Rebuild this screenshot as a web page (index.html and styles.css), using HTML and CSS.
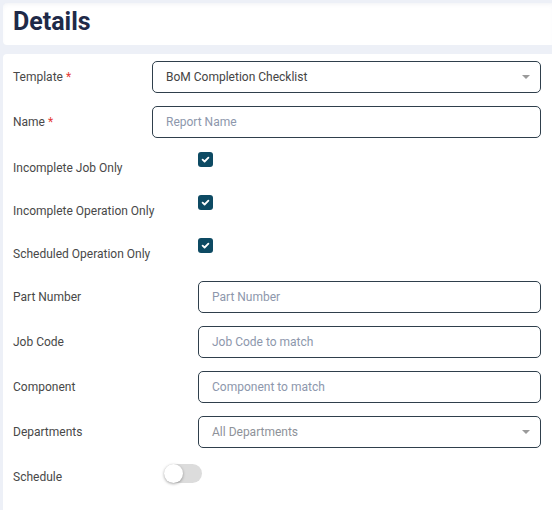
FILE: index.html
```html
<!DOCTYPE html>
<html lang="en">
<head>
<meta charset="utf-8">
<title>Details</title>
<link rel="stylesheet" href="styles.css">
</head>
<body>
<div class="page">
  <div class="header-card">
    <h1 class="title">Details</h1>
  </div>
  <div class="form-card">
    <div class="field">
      <div class="label">Template <span class="req">*</span></div>
      <div class="control select">
        <span class="value">BoM Completion Checklist</span>
        <span class="caret"></span>
      </div>
    </div>
    <div class="field">
      <div class="label">Name <span class="req">*</span></div>
      <div class="control"><span class="placeholder">Report Name</span></div>
    </div>
    <div class="check-row">
      <div class="label label-wide label-check">Incomplete Job Only</div>
      <div class="checkbox"><svg viewBox="0 0 15 15" width="15" height="15"><path d="M4.6 7.6 L6.6 9.5 L10.4 5.6" fill="none" stroke="#fff" stroke-width="1.8" stroke-linecap="round" stroke-linejoin="round"/></svg></div>
    </div>
    <div class="check-row">
      <div class="label label-wide label-check">Incomplete Operation Only</div>
      <div class="checkbox"><svg viewBox="0 0 15 15" width="15" height="15"><path d="M4.6 7.6 L6.6 9.5 L10.4 5.6" fill="none" stroke="#fff" stroke-width="1.8" stroke-linecap="round" stroke-linejoin="round"/></svg></div>
    </div>
    <div class="check-row">
      <div class="label label-wide label-check">Scheduled Operation Only</div>
      <div class="checkbox"><svg viewBox="0 0 15 15" width="15" height="15"><path d="M4.6 7.6 L6.6 9.5 L10.4 5.6" fill="none" stroke="#fff" stroke-width="1.8" stroke-linecap="round" stroke-linejoin="round"/></svg></div>
    </div>
    <div class="field field-first-wide">
      <div class="label label-wide">Part Number</div>
      <div class="control"><span class="placeholder">Part Number</span></div>
    </div>
    <div class="field">
      <div class="label label-wide">Job Code</div>
      <div class="control"><span class="placeholder">Job Code to match</span></div>
    </div>
    <div class="field">
      <div class="label label-wide">Component</div>
      <div class="control"><span class="placeholder">Component to match</span></div>
    </div>
    <div class="field">
      <div class="label label-wide">Departments</div>
      <div class="control select">
        <span class="placeholder grey">All Departments</span>
        <span class="caret"></span>
      </div>
    </div>
    <div class="toggle-row">
      <div class="label label-toggle">Schedule</div>
      <div class="toggle"><span class="knob"></span></div>
    </div>
  </div>
</div>
</body>
</html>
```
FILE: styles.css
```css
html, body {
  margin: 0;
  padding: 0;
}
body {
  background: #edf0f7;
  font-family: Roboto, "Liberation Sans", Arial, sans-serif;
  color: #444;
}
.page {
  box-sizing: border-box;
  min-height: 100vh;
  padding: 3px 0 0 3px;
  display: flex;
  flex-direction: column;
  gap: 9px;
}
.header-card {
  background: #fff;
  height: 42px;
  border-radius: 4px 0 0 4px;
  padding: 0 10px;
  box-shadow: inset 0 3px 6px -4px rgba(40, 60, 110, 0.12);
}
.title {
  margin: 0;
  font-size: 25px;
  line-height: 38px;
  font-weight: 700;
  color: #1e2a48;
}
.form-card {
  flex: 1;
  background: #fff;
  border-radius: 4px 0 0 0;
  padding: 7px 11px 20px 10px;
  display: flex;
  flex-direction: column;
  gap: 13px;
}
.field {
  display: flex;
  align-items: center;
  height: 32px;
}
.field-first-wide {
  margin-top: 1px;
}
.label {
  width: 139px;
  flex-shrink: 0;
  font-size: 12px;
  color: #484848;
}
.label-wide {
  width: 185px;
}
.label-check {
  padding-top: 3px;
}
.label-toggle {
  width: 151px;
  padding-top: 1px;
}
.req {
  color: #e53935;
}
.control {
  flex: 1;
  box-sizing: border-box;
  height: 32px;
  border: 1px solid #2f3f4c;
  border-radius: 5px;
  padding: 0 10px 0 13px;
  display: flex;
  align-items: center;
  font-size: 12px;
}
.value {
  color: #444;
}
.placeholder {
  color: #8d97ac;
}
.placeholder.grey {
  color: #8e9299;
}
.caret {
  margin-left: auto;
  width: 0;
  height: 0;
  border-left: 4px solid transparent;
  border-right: 4px solid transparent;
  border-top: 4px solid #9a9a9a;
}
.check-row {
  display: flex;
  align-items: center;
  height: 30px;
}
.checkbox {
  align-self: flex-start;
  margin-top: 1px;
  width: 15px;
  height: 15px;
  border-radius: 3px;
  background: #0d4a63;
}
.checkbox svg {
  display: block;
}
.toggle-row {
  display: flex;
  align-items: center;
  height: 30px;
}
.toggle {
  align-self: flex-start;
  margin-top: 3px;
  position: relative;
  width: 38px;
  height: 19px;
  border-radius: 10px;
  background: #dcdcdc;
}
.knob {
  position: absolute;
  left: 0;
  top: 0;
  width: 19px;
  height: 19px;
  border-radius: 50%;
  background: #fff;
  box-shadow: 0 1px 3px rgba(0, 0, 0, 0.35);
}
```
